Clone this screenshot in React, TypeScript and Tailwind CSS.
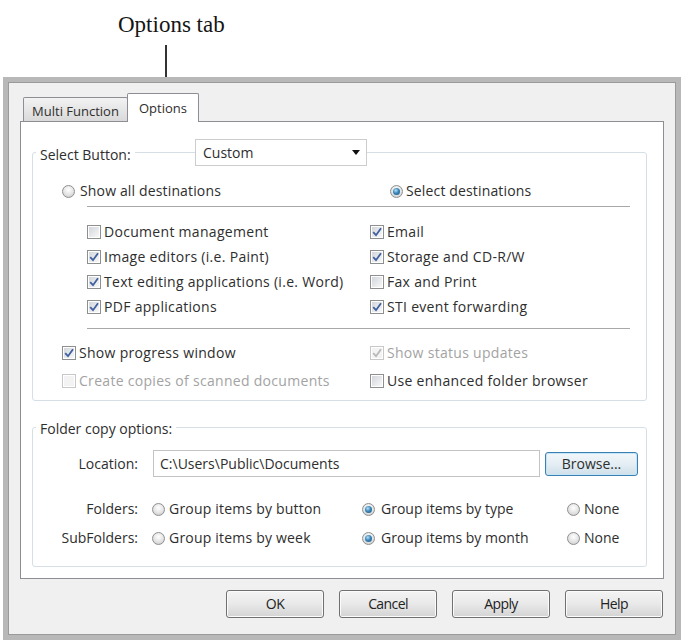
import React from "react";

type BoxProps = { checked?: boolean; disabled?: boolean };

function CheckBox({ checked, disabled }: BoxProps) {
  return (
    <span
      className={`flex h-[14px] w-[14px] shrink-0 border bg-white p-px ${
        disabled ? "border-[#c8c8c8]" : "border-[#8e8f8f]"
      }`}
    >
      <span
        className={`flex h-full w-full items-center justify-center ${
          disabled ? "bg-[#f3f3f3]" : "bg-gradient-to-br from-[#d2d6dc] to-[#f8f8f8]"
        }`}
      >
        {checked && (
          <svg width="10" height="10" viewBox="0 0 10 10" className="overflow-visible">
            <path
              d="M1.2 5.2 L4 8.2 L9 1.2"
              fill="none"
              stroke={disabled ? "#b8b8b8" : "#3f5f9e"}
              strokeWidth="1.8"
            />
          </svg>
        )}
      </span>
    </span>
  );
}

function Radio({ checked }: { checked?: boolean }) {
  return (
    <span className="flex h-[13px] w-[13px] shrink-0 items-center justify-center rounded-full border border-[#8e8f8f] bg-[radial-gradient(circle_at_50%_35%,#ffffff_0%,#e6e6e6_50%,#c6c6c6_100%)]">
      {checked && (
        <span className="h-[7px] w-[7px] rounded-full bg-[radial-gradient(circle_at_40%_35%,#b6e3f7_0%,#3a86ba_45%,#18507a_100%)]" />
      )}
    </span>
  );
}

function CheckRow({ label, checked, disabled }: { label: string } & BoxProps) {
  return (
    <div className="flex items-center gap-[3px] tracking-[0.3px]">
      <CheckBox checked={checked} disabled={disabled} />
      <span className={disabled ? "text-[#a3a3a3]" : ""}>{label}</span>
    </div>
  );
}

function DialogButton({ label }: { label: string }) {
  return (
    <div className="flex h-[28px] w-[98px] items-center justify-center rounded-[3px] border border-[#707070] bg-gradient-to-b from-[#f4f4f4] via-[#e9e9e9] to-[#d3d3d3] text-[14px] tracking-[-0.6px] text-[#222] shadow-[inset_0_0_0_1px_#fbfbfb]">
      {label}
    </div>
  );
}

export default function App() {
  return (
    <div className="h-[642px] w-[687px] overflow-hidden bg-white font-['Open_Sans',sans-serif] text-[14px] leading-[20px] text-[#2e2e2e]">
      {/* callout */}
      <div className="flex h-[77px] flex-col">
        <div className="pl-[118px] pt-[13px] font-['Liberation_Serif',serif] text-[23px] leading-[23px] text-[#151515]">
          Options tab
        </div>
        <div className="ml-[165px] mt-[9px] h-[32px] w-[2px] bg-[#333]" />
      </div>

      {/* dialog frame */}
      <div className="ml-[3px] h-[563px] w-[678px] border-[5px] border-[#b8b8b8] bg-[#f0f0f0]">
        <div className="h-full w-full border border-[#9a9a9a] pl-[11px] pt-[10px]">
          {/* tabs */}
          <div className="flex h-[28px] items-end pl-[3px] text-[13px]">
            <div className="flex h-[24px] w-[105px] items-center justify-center rounded-t-[2px] border border-b-0 border-[#8c8e94] bg-gradient-to-b from-[#f3f3f3] to-[#d9d9d9] pt-[3px]">
              Multi Function
            </div>
            <div className="relative z-10 -mb-px -ml-px flex h-[29px] w-[72px] items-center justify-center rounded-t-[2px] border border-b-0 border-[#8c8e94] bg-white">
              Options
            </div>
          </div>

          {/* tab page */}
          <div className="h-[458px] w-[644px] border border-[#8c8e94] bg-white">
            {/* Select Button group */}
            <div className="relative ml-[11px] mt-[30px] h-[249px] w-[615px] rounded-[3px] border border-[#d5dfe5]">
              <span className="absolute left-[3px] top-[-8px] bg-white px-[4px] leading-[20px]">
                Select Button:
              </span>
              <div className="absolute left-[162px] top-[-14px] flex h-[27px] w-[172px] items-center justify-between border border-[#cdcdcd] bg-white pl-[7px] pr-[6px]">
                <span>Custom</span>
                <svg width="8" height="5" viewBox="0 0 8 5">
                  <path d="M0 0H8L4 5Z" fill="#111" />
                </svg>
              </div>

              <div className="flex flex-col pt-[29px]">
                <div className="flex h-[18px] items-center pl-[29px] tracking-[0.15px]">
                  <div className="flex w-[328px] items-center gap-[5px]">
                    <Radio />
                    <span>Show all destinations</span>
                  </div>
                  <div className="flex items-center gap-[3px]">
                    <Radio checked />
                    <span>Select destinations</span>
                  </div>
                </div>

                <div className="ml-[54px] mt-[6px] h-px w-[543px] bg-[#a8a8a8]" />

                <div className="mt-[12px] grid grid-cols-[283px_1fr] auto-rows-[25px] items-center pl-[54px]">
                  <CheckRow label="Document management" />
                  <CheckRow label="Email" checked />
                  <CheckRow label="Image editors (i.e. Paint)" checked />
                  <CheckRow label="Storage and CD-R/W" checked />
                  <CheckRow label="Text editing applications (i.e. Word)" checked />
                  <CheckRow label="Fax and Print" />
                  <CheckRow label="PDF applications" checked />
                  <CheckRow label="STI event forwarding" checked />
                </div>

                <div className="ml-[54px] mt-[9px] h-px w-[543px] bg-[#a8a8a8]" />

                <div className="mt-[10px] grid grid-cols-[308px_1fr] auto-rows-[28px] items-center pl-[29px]">
                  <CheckRow label="Show progress window" checked />
                  <CheckRow label="Show status updates" checked disabled />
                  <CheckRow label="Create copies of scanned documents" disabled />
                  <CheckRow label="Use enhanced folder browser" />
                </div>
              </div>
            </div>

            {/* Folder copy options group */}
            <div className="relative ml-[11px] mt-[26px] h-[140px] w-[615px] rounded-[3px] border border-[#d5dfe5]">
              <span className="absolute left-[3px] top-[-9px] bg-white px-[4px] leading-[20px]">
                Folder copy options:
              </span>

              <div className="flex flex-col pt-[22px]">
                <div className="flex h-[27px] items-center">
                  <span className="w-[105px] text-right">Location:</span>
                  <div className="ml-[15px] flex h-[27px] w-[387px] items-center border border-[#c3c3c3] bg-white pl-[6px]">
                    C:\Users\Public\Documents
                  </div>
                  <div className="ml-[5px] flex h-[24px] w-[93px] items-center justify-center rounded-[3px] border border-[#3c7fb1] bg-gradient-to-b from-[#f2f7fa] via-[#e4eef4] to-[#cfdfe9] shadow-[inset_0_0_0_1px_#c4e5f6]">
                    Browse...
                  </div>
                </div>

                <div className="mt-[22px] flex h-[20px] items-center">
                  <span className="w-[105px] text-right">Folders:</span>
                  <div className="ml-[14px] flex w-[210px] items-center gap-[4px] tracking-[0.2px]">
                    <Radio />
                    <span>Group items by button</span>
                  </div>
                  <div className="flex w-[205px] items-center gap-[6px]">
                    <Radio checked />
                    <span>Group items by type</span>
                  </div>
                  <div className="flex items-center gap-[4px]">
                    <Radio />
                    <span>None</span>
                  </div>
                </div>

                <div className="mt-[9px] flex h-[20px] items-center">
                  <span className="w-[105px] text-right">SubFolders:</span>
                  <div className="ml-[14px] flex w-[210px] items-center gap-[4px] tracking-[0.2px]">
                    <Radio />
                    <span>Group items by week</span>
                  </div>
                  <div className="flex w-[205px] items-center gap-[6px]">
                    <Radio checked />
                    <span>Group items by month</span>
                  </div>
                  <div className="flex items-center gap-[4px]">
                    <Radio />
                    <span>None</span>
                  </div>
                </div>
              </div>
            </div>
          </div>

          {/* dialog buttons */}
          <div className="mt-[11px] flex w-[644px] justify-end gap-[15px] pr-[1px]">
            <DialogButton label="OK" />
            <DialogButton label="Cancel" />
            <DialogButton label="Apply" />
            <DialogButton label="Help" />
          </div>
        </div>
      </div>
    </div>
  );
}
